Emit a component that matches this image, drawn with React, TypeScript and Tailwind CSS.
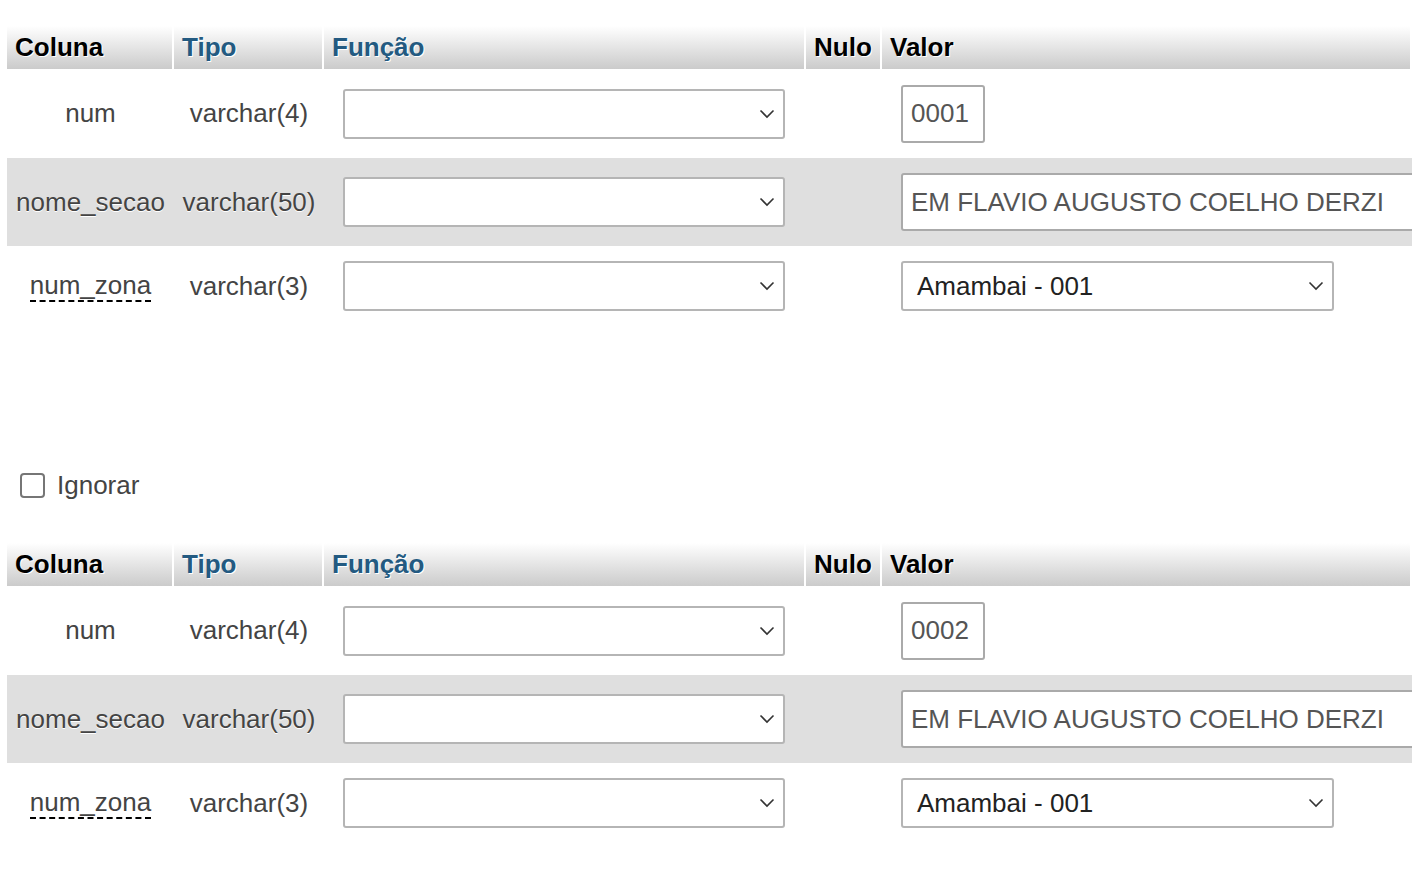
import React from "react";

const font = { fontFamily: '"Liberation Sans", Arial, Helvetica, sans-serif' };

function Chevron() {
  return (
    <svg width="16" height="10" viewBox="0 0 16 10" className="absolute right-[8px] top-1/2 -translate-y-1/2">
      <path d="M1.5 1.5 L8 8 L14.5 1.5" fill="none" stroke="#333" strokeWidth="1.6" />
    </svg>
  );
}

function Select({ w, h, text }: { w: number; h: number; text?: string }) {
  return (
    <div
      className="relative shrink-0 rounded-[3px] border-2 border-[#b5b5b5] bg-white flex items-center"
      style={{ width: w, height: h }}
    >
      {text && <span className="pl-[14px] text-[26px] text-[#222]">{text}</span>}
      <Chevron />
    </div>
  );
}

function Header() {
  const th = "h-[43px] flex items-center pl-[8px] text-[26px] font-bold [text-shadow:1px_1px_0_#fff] border-r-2 border-white shrink-0";
  return (
    <div className="flex bg-gradient-to-b from-white to-[#cbcbcb] w-[1405px]">
      <div className={`${th} w-[167px] text-black`}>Coluna</div>
      <div className={`${th} w-[150px] text-[#235a81]`}>Tipo</div>
      <div className={`${th} w-[482px] text-[#235a81]`}>Função</div>
      <div className={`${th} w-[76px] text-black`}>Nulo</div>
      <div className={`${th} flex-1 text-black border-r-0`}>Valor</div>
    </div>
  );
}

function Row({
  name,
  type,
  gray,
  h,
  dashed,
  value,
}: {
  name: string;
  type: string;
  gray?: boolean;
  h: number;
  dashed?: boolean;
  value: React.ReactNode;
}) {
  return (
    <div
      className={`flex items-center w-[1405px] text-[26px] text-[#444] [text-shadow:0_1px_0_#fff] ${gray ? "bg-[#dfdfdf]" : "bg-white"}`}
      style={{ height: h }}
    >
      <div className="w-[167px] shrink-0 flex justify-center">
        {dashed ? (
          <span className="border-b-2 border-dashed border-black leading-[30px]">{name}</span>
        ) : (
          <span>{name}</span>
        )}
      </div>
      <div className="w-[150px] shrink-0 flex justify-center whitespace-nowrap">{type}</div>
      <div className="w-[482px] shrink-0 pl-[19px]">
        <Select w={442} h={50} />
      </div>
      <div className="w-[76px] shrink-0" />
      <div className="flex-1 pl-[19px] overflow-hidden">{value}</div>
    </div>
  );
}

function TextInput({ w, text }: { w: number; text: string }) {
  return (
    <div
      className="shrink-0 h-[58px] rounded-[3px] border-2 border-[#aaa] bg-white flex items-center pl-[8px] text-[26px] text-[#555] whitespace-nowrap [text-shadow:none]"
      style={{ width: w }}
    >
      {text}
    </div>
  );
}

function Block({ num }: { num: string }) {
  return (
    <div>
      <Header />
      <Row name="num" type="varchar(4)" h={89} value={<TextInput w={84} text={num} />} />
      <Row
        name="nome_secao"
        type="varchar(50)"
        gray
        h={88}
        value={<TextInput w={560} text="EM FLAVIO AUGUSTO COELHO DERZI" />}
      />
      <Row
        name="num_zona"
        type="varchar(3)"
        dashed
        h={80}
        value={<Select w={433} h={50} text="Amambai - 001" />}
      />
    </div>
  );
}

export default function App() {
  return (
    <div className="w-[1412px] h-[878px] overflow-hidden bg-white" style={font}>
      <div className="pt-[26px] pl-[7px]">
        <Block num="0001" />
        <div className="flex items-center gap-[12px] mt-[134px] ml-[13px] h-[50px]">
          <div className="w-[25px] h-[25px] rounded-[4px] border-2 border-[#767676] bg-white" />
          <span className="text-[26px] text-[#444]">Ignorar</span>
        </div>
        <div className="mt-[33px]">
          <Block num="0002" />
        </div>
      </div>
    </div>
  );
}
